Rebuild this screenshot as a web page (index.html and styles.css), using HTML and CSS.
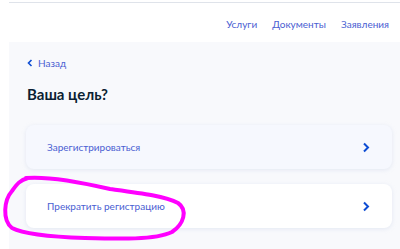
FILE: index.html
```html
<!DOCTYPE html>
<html lang="ru">
  <head>
    <meta charset="UTF-8" />
    <meta name="viewport" content="width=device-width, initial-scale=1.0" />
    <title>Ваша цель?</title>
    <link rel="stylesheet" href="styles.css">
  </head>
  <body>
    <div class="page">
      <div class="topline"></div>
      <header class="header">
        <nav class="nav">
          <a href="#">Услуги</a>
          <a href="#">Документы</a>
          <a href="#">Заявления</a>
        </nav>
      </header>

      <main class="main">
        <a class="back" href="#">
          <svg width="6" height="8" viewBox="0 0 6 8"><path d="M4.5 1 1.5 4l3 3" fill="none" stroke="#0d4cd3" stroke-width="1.6"/></svg>
          Назад
        </a>
        <h1 class="title">Ваша цель?</h1>

        <a class="option option-hover" href="#">
          <span>Зарегистрироваться</span>
          <svg width="8" height="11" viewBox="0 0 8 11"><path d="M2 1.5 6 5.5l-4 4" fill="none" stroke="#0d4cd3" stroke-width="2"/></svg>
        </a>
        <a class="option" href="#">
          <span>Прекратить регистрацию</span>
          <svg width="8" height="11" viewBox="0 0 8 11"><path d="M2 1.5 6 5.5l-4 4" fill="none" stroke="#0d4cd3" stroke-width="2"/></svg>
        </a>
      </main>
    </div>

    <!-- marker circled by hand on the screenshot -->
    <svg class="scribble" width="400" height="249" viewBox="0 0 400 249">
      <path d="M26 178 C50 176 80 182 110 189 C140 193 165 196 178 203 C188 210 184 224 172 232 C155 240 120 239 85 238 C55 237 25 235 12 228 C2 220 4 200 12 191 C17 184 20 180 28 178"
            fill="none" stroke="#ff00ff" stroke-width="4" stroke-linecap="round"/>
    </svg>
  </body>
</html>
```

FILE: styles.css
```css
body {
  margin: 0;
  background: #fff;
  font-family: Lato, "Noto Sans", Arial, sans-serif;
  color: #0b1f33;
}
.page {
  margin-left: 9px;
  height: 249px;
  overflow: hidden;
}
.topline {
  margin-top: 2px;
  height: 1px;
  background: #dfe3ea;
}
.header {
  height: 39px;
  display: flex;
  justify-content: flex-end;
  align-items: center;
  padding-right: 11px;
}
.nav {
  display: flex;
  gap: 15px;
  padding-top: 2px;
}
.nav a {
  font-size: 10px;
  color: #4a60d2;
  text-decoration: none;
}
.main {
  background: #f8f9fc;
  padding: 9px 8px 20px 17px;
  min-height: 200px;
}
.back {
  display: inline-flex;
  align-items: center;
  gap: 5px;
  font-size: 10px;
  color: #4a60d2;
  text-decoration: none;
  margin-left: 1px;
}
.title {
  margin: 14px 0 21px 1px;
  font-size: 15px;
  font-weight: 700;
  line-height: 20px;
}
.option {
  display: flex;
  justify-content: space-between;
  align-items: center;
  height: 44px;
  padding: 0 22px 0 21px;
  margin-bottom: 15px;
  background: #fff;
  border-radius: 8px;
  box-shadow: 0 1px 4px rgba(190, 200, 225, 0.35);
  font-size: 10px;
  color: #4a60d2;
  text-decoration: none;
}
.option-hover {
  background: #f6f8fe;
}
.scribble {
  position: absolute;
  top: 0;
  left: 0;
  pointer-events: none;
}
```
